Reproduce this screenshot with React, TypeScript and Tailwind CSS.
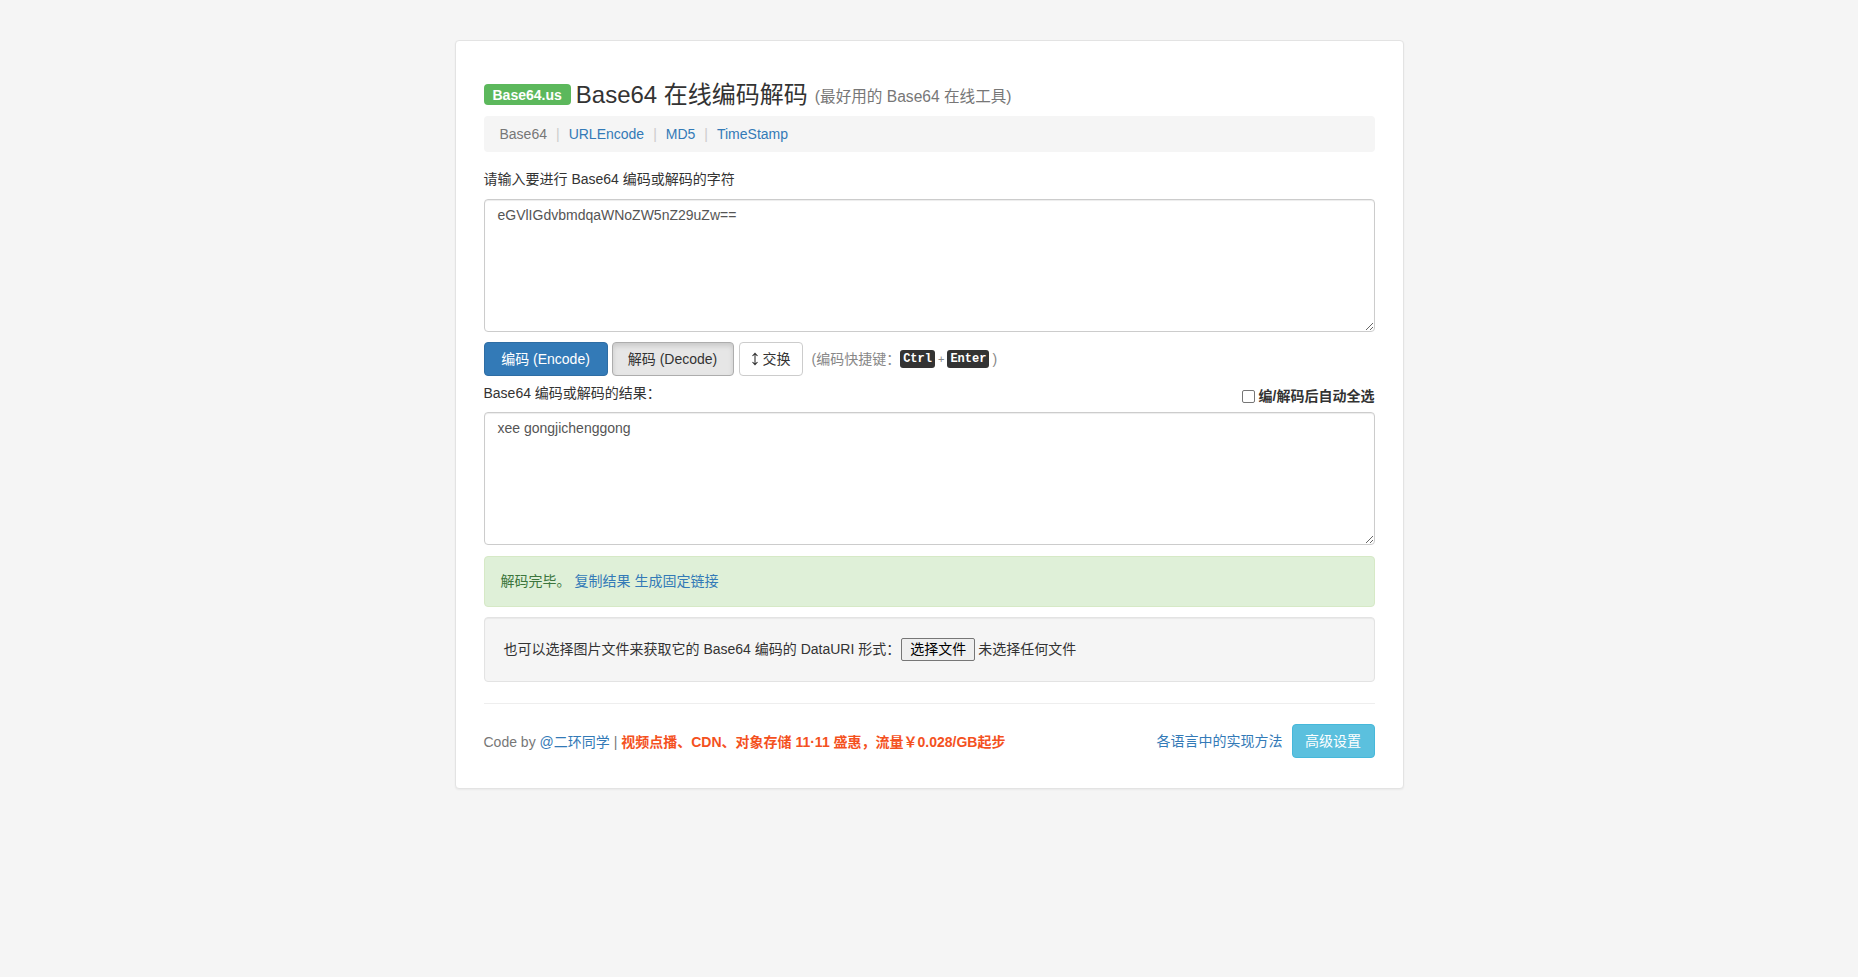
import React from "react";

const FONT = '"Liberation Sans", "Noto Sans CJK SC", sans-serif';

function Kbd({ children }: { children: React.ReactNode }) {
  return (
    <kbd className="inline-flex h-[18px] items-center rounded-[3px] bg-[#333] px-[3px] text-[12px] font-bold text-white [font-family:'Liberation_Mono',monospace]">
      {children}
    </kbd>
  );
}

function Sep() {
  return <span className="px-[9px] text-[#ccc]">|</span>;
}

export default function App() {
  return (
    <div className="min-h-screen bg-[#f5f5f5] pt-[40px] text-[14px] text-[#333]" style={{ fontFamily: FONT }}>
      <div className="mx-auto w-[949px] rounded-[4px] border border-[#e3e3e3] bg-white px-[28px] pt-[38px] pb-[30px] shadow-[0_1px_2px_rgba(0,0,0,0.05)]">
        {/* Title */}
        <div className="flex h-[31px] items-center">
          <span className="flex h-[21px] items-center rounded-[4px] bg-[#5cb85c] px-[9px] text-[14px] font-bold leading-none text-white">
            Base64.us
          </span>
          <span className="ml-[5px] text-[24px] leading-[30px] text-[#333]">Base64 在线编码解码</span>
          <span className="ml-[7px] mt-[4px] text-[15.6px] text-[#777]">(最好用的 Base64 在线工具)</span>
        </div>

        {/* Nav */}
        <div className="mt-[6px] flex h-[36px] items-center rounded-[4px] bg-[#f5f5f5] pl-[16px] text-[14px]">
          <span className="text-[#777]">Base64</span>
          <Sep />
          <a className="text-[#337ab7]">URLEncode</a>
          <Sep />
          <a className="text-[#337ab7]">MD5</a>
          <Sep />
          <a className="text-[#337ab7]">TimeStamp</a>
        </div>

        {/* Input */}
        <div className="mt-[17px] leading-[20px]">请输入要进行 Base64 编码或解码的字符</div>
        <textarea
          className="mt-[10px] block h-[133px] w-full rounded-[4px] border border-[#ccc] px-[13px] py-[5px] text-[14px] leading-[20px] text-[#555] shadow-[inset_0_1px_1px_rgba(0,0,0,0.075)] outline-none"
          style={{ fontFamily: FONT }}
          defaultValue="eGVlIGdvbmdqaWNoZW5nZ29uZw=="
        />

        {/* Buttons */}
        <div className="mt-[10px] flex items-center">
          <button className="flex h-[34px] w-[124px] items-center justify-center rounded-[4px] border border-[#2e6da4] bg-[#337ab7] text-[14px] text-white">
            编码 (Encode)
          </button>
          <button className="ml-[4px] flex h-[34px] w-[122px] items-center justify-center rounded-[4px] border border-[#adadad] bg-[#e6e6e6] text-[14px] text-[#333] shadow-[inset_0_3px_5px_rgba(0,0,0,0.125)]">
            解码 (Decode)
          </button>
          <button className="ml-[5px] flex h-[34px] w-[64px] items-center justify-center rounded-[4px] border border-[#ccc] bg-white text-[14px] text-[#333]">
            <svg width="8" height="14" viewBox="0 0 8 14" className="mr-[4px]">
              <path d="M4 1.5 V12.5 M1.5 4 L4 1.3 L6.5 4 M1.5 10 L4 12.7 L6.5 10" stroke="#333" strokeWidth="1.1" fill="none" />
            </svg>
            交换
          </button>
          <span className="ml-[9px] flex items-center text-[14px] text-[#888]">
            (编码快捷键：
            <Kbd>Ctrl</Kbd>
            <span className="mx-[3px] text-[11px]">+</span>
            <Kbd>Enter</Kbd>
            <span className="ml-[3px]">)</span>
          </span>
        </div>

        {/* Result label row */}
        <div className="mt-[7px] flex h-[29px] justify-between">
          <div className="leading-[20px]">Base64 编码或解码的结果：</div>
          <label className="flex items-center self-end pb-[6px] text-[14px] font-bold leading-[20px]">
            <span className="mr-[4px] inline-block h-[13px] w-[13px] rounded-[2px] border border-[#767676] bg-white" />
            编/解码后自动全选
          </label>
        </div>
        <textarea
          className="block h-[133px] w-full rounded-[4px] border border-[#ccc] px-[13px] py-[5px] text-[14px] leading-[20px] text-[#555] shadow-[inset_0_1px_1px_rgba(0,0,0,0.075)] outline-none"
          style={{ fontFamily: FONT }}
          defaultValue="xee gongjichenggong"
        />

        {/* Alert */}
        <div className="mt-[11px] flex h-[51px] items-center rounded-[4px] border border-[#d6e9c6] bg-[#dff0d8] pl-[16px] text-[14px] text-[#3c763d]">
          <span>解码完毕。</span>
          <a className="ml-[4px] text-[#337ab7]">复制结果</a>
          <a className="ml-[4px] text-[#337ab7]">生成固定链接</a>
        </div>

        {/* Well */}
        <div className="mt-[10px] flex h-[65px] items-center rounded-[4px] border border-[#e3e3e3] bg-[#f5f5f5] pl-[19px] text-[14px] shadow-[inset_0_1px_1px_rgba(0,0,0,0.05)]">
          <span>也可以选择图片文件来获取它的 Base64 编码的 DataURI 形式：</span>
          <span className="ml-[1px] flex h-[23px] items-center rounded-[2px] border border-[#767676] bg-[#efefef] px-[8px] text-[14px] text-black">
            选择文件
          </span>
          <span className="ml-[3px] text-[#333]">未选择任何文件</span>
        </div>

        {/* HR */}
        <div className="mt-[21px] border-t border-[#eee]" />

        {/* Footer */}
        <div className="mt-[20px] flex items-center justify-between">
          <div className="mt-[3px] text-[14px] text-[#777]">
            Code by <a className="text-[#337ab7]">@二环同学</a> |{" "}
            <span className="font-bold text-[#f4511e]">视频点播、CDN、对象存储 11·11 盛惠，流量￥0.028/GB起步</span>
          </div>
          <div className="flex items-center">
            <a className="text-[14px] text-[#337ab7]">各语言中的实现方法</a>
            <button className="ml-[9px] flex h-[34px] w-[83px] items-center justify-center rounded-[4px] border border-[#46b8da] bg-[#5bc0de] text-[14px] text-white">
              高级设置
            </button>
          </div>
        </div>
      </div>
    </div>
  );
}
